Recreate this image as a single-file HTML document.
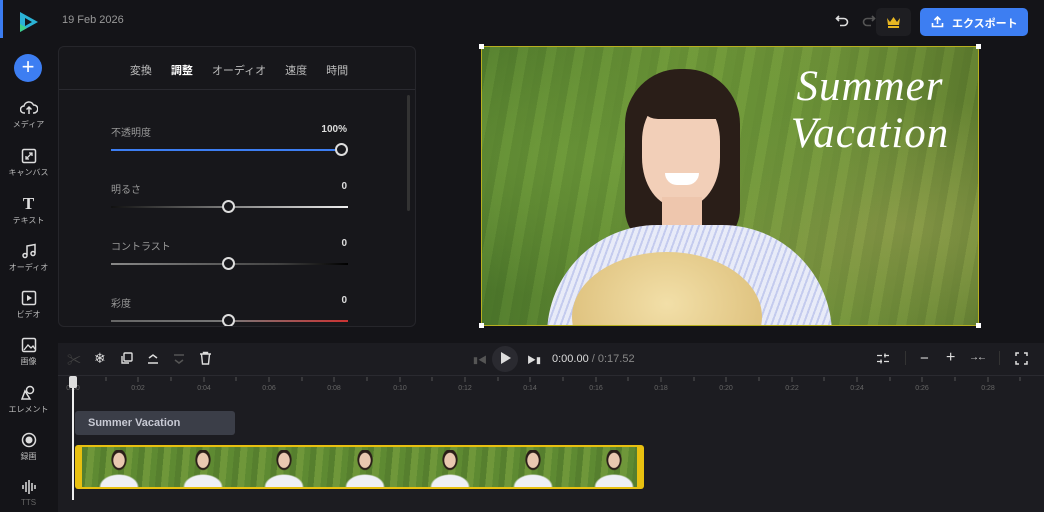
<!DOCTYPE html>
<html><head><meta charset="utf-8"><style>
*{margin:0;padding:0;box-sizing:border-box}
body{width:1044px;height:512px;background:#141418;font-family:"Liberation Sans","Noto Sans CJK JP",sans-serif;color:#ccc;position:relative;overflow:hidden}
.a{position:absolute}
.si{position:absolute;left:0;width:57px;text-align:center;font-size:8px;color:#bbb}
.si svg{display:block;margin:0 auto 3px}
.panel{left:58px;top:46px;width:358px;height:281px;background:#17171b;border:1px solid #26262b;border-radius:6px;overflow:hidden}
.tabs{height:43px;border-bottom:1px solid #2a2a30;font-size:11px;color:#bbb;display:flex;justify-content:center;gap:19px;padding-top:15px;padding-left:4px}
.lbl{font-size:10px;color:#999}
.val{font-size:10px;color:#ddd;font-weight:bold}
.knob{width:13px;height:13px;border:2px solid #ddd;border-radius:50%;background:#18181c}
.tl{left:58px;top:343px;width:986px;height:169px;background:#1c1c21}
.th{position:absolute;top:450px;width:40px;height:37px;background:radial-gradient(ellipse 6px 8px at 50% 28%,#e9c8b0 90%,transparent),radial-gradient(ellipse 8px 11px at 50% 26%,#2a1e18 90%,transparent),radial-gradient(ellipse 20px 13px at 50% 100%,#eef0f6 90%,transparent)}
</style></head><body>
<div class="a" style="left:0;top:0;width:3px;height:38px;background:#3b7cf0"></div>
<svg class="a" style="left:17px;top:10px" width="24" height="24" viewBox="0 0 24 24"><path d="M3 2 L3 22 L21 12 Z" fill="#2bb3d6"/><path d="M8 8 L8 16 L15 12 Z" fill="#141418"/><path d="M3 14 L3 22 L10 18Z" fill="#3fd08a"/></svg>
<div class="a" style="left:62px;top:14px;font-size:11px;color:#999">19 Feb 2026</div>
<svg class="a" style="left:835px;top:13px" width="14" height="14" viewBox="0 0 14 14"><path d="M4 3 L1.5 5.5 L4 8 M2 5.5 H9 a3.5 3.5 0 0 1 0 7 H5" stroke="#ddd" stroke-width="1.6" fill="none"/></svg>
<svg class="a" style="left:862px;top:13px" width="14" height="14" viewBox="0 0 14 14"><path d="M10 3 L12.5 5.5 L10 8 M12 5.5 H5 a3.5 3.5 0 0 0 0 7 H9" stroke="#555" stroke-width="1.6" fill="none"/></svg>
<div class="a" style="left:876px;top:8px;width:35px;height:28px;background:#1e1e22;border-radius:5px"></div>
<svg class="a" style="left:886px;top:15px" width="15" height="13" viewBox="0 0 15 13"><path d="M1 3 L4 7 L7.5 2 L11 7 L14 3 L13 10 H2 Z" fill="#e7b622"/><rect x="2" y="11" width="11" height="2" fill="#e7b622"/></svg>
<div class="a" style="left:920px;top:8px;width:108px;height:28px;background:#3d7ef2;border-radius:5px;color:#fff;font-size:11px;font-weight:bold;padding:7px 0 0 32px">エクスポート</div>
<svg class="a" style="left:931px;top:15px" width="13" height="13" viewBox="0 0 13 13"><path d="M6.5 9 V2 M3.5 5 L6.5 2 L9.5 5 M1.5 8 V11.5 H11.5 V8" stroke="#fff" stroke-width="1.6" fill="none"/></svg>

<div class="a" style="left:14px;top:54px;width:28px;height:28px;border-radius:50%;background:#3d7ef2;color:#fff;font-size:22px;line-height:26px;text-align:center">+</div>
<div class="si" style="top:100px"><svg width="18" height="16" viewBox="0 0 18 16"><path d="M5 13 H4 a3.5 3.5 0 0 1 0-7 a5 5 0 0 1 9.5-1 a3.7 3.7 0 0 1 0.5 8 H13 M9 14 V7 M6.5 9.5 L9 7 L11.5 9.5" stroke="#ddd" stroke-width="1.5" fill="none"/></svg>メディア</div>
<div class="si" style="top:148px"><svg width="16" height="16" viewBox="0 0 16 16"><rect x="1.5" y="1.5" width="13" height="13" rx="1.5" stroke="#ddd" stroke-width="1.5" fill="none"/><path d="M5 11 L11 5 M8 5 H11 V8 M5 8 V11 H8" stroke="#ddd" stroke-width="1.3" fill="none"/></svg>キャンバス</div>
<div class="si" style="top:196px"><div style="font-family:'Liberation Serif',serif;font-size:17px;color:#ddd;font-weight:bold;line-height:16px;margin-bottom:3px">T</div>テキスト</div>
<div class="si" style="top:243px"><svg width="16" height="16" viewBox="0 0 16 16"><path d="M6 12 V3 L14 1.5 V10" stroke="#ddd" stroke-width="1.5" fill="none"/><circle cx="4" cy="12.5" r="2" stroke="#ddd" stroke-width="1.5" fill="none"/><circle cx="12" cy="10.5" r="2" stroke="#ddd" stroke-width="1.5" fill="none"/></svg>オーディオ</div>
<div class="si" style="top:290px"><svg width="16" height="16" viewBox="0 0 16 16"><rect x="1.5" y="1.5" width="13" height="13" rx="1.5" stroke="#ddd" stroke-width="1.5" fill="none"/><path d="M6 5 L11 8 L6 11Z" fill="#ddd"/></svg>ビデオ</div>
<div class="si" style="top:337px"><svg width="16" height="16" viewBox="0 0 16 16"><rect x="1.5" y="1.5" width="13" height="13" rx="1.5" stroke="#ddd" stroke-width="1.5" fill="none"/><path d="M3 13 L7 8 L10 11 L12 9 L14 12" stroke="#ddd" stroke-width="1.3" fill="none"/></svg>画像</div>
<div class="si" style="top:385px"><svg width="16" height="16" viewBox="0 0 16 16"><circle cx="9" cy="5" r="3.5" stroke="#ddd" stroke-width="1.5" fill="none"/><path d="M4 6 L1 14 H9 Z" stroke="#ddd" stroke-width="1.5" fill="none"/></svg>エレメント</div>
<div class="si" style="top:432px"><svg width="16" height="16" viewBox="0 0 16 16"><circle cx="8" cy="8" r="6.5" stroke="#ddd" stroke-width="1.5" fill="none"/><circle cx="8" cy="8" r="3.5" fill="#ddd"/></svg>録画</div>
<div class="si" style="top:479px;color:#666"><svg width="16" height="16" viewBox="0 0 16 16"><path d="M2 6v4M5 3v10M8 1v14M11 4v8M14 6v4" stroke="#ddd" stroke-width="1.5"/></svg>TTS</div>

<div class="a panel">
<div class="tabs"><span>変換</span><span style="color:#fff;font-weight:bold">調整</span><span>オーディオ</span><span>速度</span><span>時間</span></div>
<div class="a" style="left:348px;top:48px;width:3px;height:116px;background:#333;border-radius:2px"></div>
<div class="a lbl" style="left:52px;top:77px">不透明度</div><div class="a val" style="right:68px;top:77px">100%</div>
<div class="a" style="left:52px;top:102px;width:230px;height:2px;background:#3d7ef2"></div><div class="a knob" style="left:276px;top:96px"></div>
<div class="a lbl" style="left:52px;top:134px">明るさ</div><div class="a val" style="right:68px;top:134px">0</div>
<div class="a" style="left:52px;top:159px;width:237px;height:2px;background:linear-gradient(90deg,#111,#eee)"></div><div class="a knob" style="left:163px;top:153px"></div>
<div class="a lbl" style="left:52px;top:191px">コントラスト</div><div class="a val" style="right:68px;top:191px">0</div>
<div class="a" style="left:52px;top:216px;width:237px;height:2px;background:linear-gradient(90deg,#888,#444 70%,#000)"></div><div class="a knob" style="left:163px;top:210px"></div>
<div class="a lbl" style="left:52px;top:248px">彩度</div><div class="a val" style="right:68px;top:248px">0</div>
<div class="a" style="left:52px;top:273px;width:237px;height:2px;background:linear-gradient(90deg,#666,#777 50%,#c33)"></div><div class="a knob" style="left:163px;top:267px"></div>
</div>

<div class="a" style="left:481px;top:46px;width:498px;height:280px;overflow:hidden;border:1px solid #b8b020;background:radial-gradient(ellipse at 25% 40%,#6e9a3a,transparent 60%),radial-gradient(ellipse at 85% 65%,#8a9a48,transparent 50%),linear-gradient(90deg,#4f7a2c,#6f9838 40%,#72963a 70%,#627f30)">
 <div class="a" style="left:0;top:0;width:498px;height:280px;background:repeating-linear-gradient(100deg,rgba(30,60,20,.12) 0 8px,rgba(140,180,80,.08) 8px 18px,rgba(40,70,25,.1) 18px 28px)"></div>
 <div class="a" style="left:143px;top:22px;width:115px;height:180px;background:#2a1e18;border-radius:55px 55px 40px 40px"></div>
 <div class="a" style="left:160px;top:50px;width:78px;height:110px;background:#f2cfb8;border-radius:40% 40% 45% 45%"></div>
 <div class="a" style="left:156px;top:30px;width:88px;height:42px;background:#2a1e18;border-radius:44px 44px 10px 40px"></div>
 <div class="a" style="left:183px;top:126px;width:34px;height:12px;background:#fff;border-radius:0 0 17px 17px"></div>
 <div class="a" style="left:180px;top:150px;width:40px;height:40px;background:#eec6ad"></div>
 <div class="a" style="left:65px;top:178px;width:285px;height:140px;background:repeating-linear-gradient(110deg,#e8ebf8 0 4px,#c4cbee 4px 6px);border-radius:110px 110px 0 0"></div>
 <div class="a" style="left:90px;top:205px;width:190px;height:130px;background:radial-gradient(ellipse at 50% 40%,#f2dfa8,#d8b870);border-radius:50%"></div>
 <div class="a" style="left:298px;top:16px;width:180px;font-family:'Liberation Serif',serif;font-style:italic;color:#fff;font-size:43px;line-height:47px;text-align:center;letter-spacing:1px">Summer<br>Vacation</div>
</div>
<div class="a" style="left:479px;top:44px;width:5px;height:5px;background:#fff"></div>
<div class="a" style="left:976px;top:44px;width:5px;height:5px;background:#fff"></div>
<div class="a" style="left:976px;top:323px;width:5px;height:5px;background:#fff"></div>
<div class="a" style="left:479px;top:323px;width:5px;height:5px;background:#fff"></div>

<div class="a tl"></div>
<div class="a" style="left:58px;top:375px;width:986px;height:1px;background:#2a2a30"></div>
<div class="a" style="left:67px;top:350px;font-size:14px;color:#444">✂</div>
<div class="a" style="left:94px;top:350px;font-size:14px;color:#ddd">❄</div>
<svg class="a" style="left:120px;top:352px" width="13" height="13" viewBox="0 0 13 13"><rect x="4" y="1" width="8" height="8" rx="1" stroke="#ddd" stroke-width="1.4" fill="none"/><path d="M2 4 V11 H9" stroke="#ddd" stroke-width="1.4" fill="none"/></svg>
<svg class="a" style="left:146px;top:352px" width="14" height="14" viewBox="0 0 14 14"><path d="M3 6 L7 3 L11 6 M2 11 H12" stroke="#ddd" stroke-width="1.5" fill="none"/></svg>
<svg class="a" style="left:172px;top:352px" width="14" height="14" viewBox="0 0 14 14"><path d="M3 8 L7 11 L11 8 M2 3 H12" stroke="#555" stroke-width="1.5" fill="none"/></svg>
<svg class="a" style="left:199px;top:351px" width="13" height="14" viewBox="0 0 13 14"><path d="M1 3 H12 M4.5 3 V1.5 H8.5 V3 M2.5 3 L3.5 13 H9.5 L10.5 3" stroke="#ddd" stroke-width="1.4" fill="none"/></svg>
<div class="a" style="left:473px;top:353px;font-size:9px;color:#555">▮◀</div>
<div class="a" style="left:492px;top:346px;width:26px;height:26px;border-radius:50%;background:#2a2a30"></div>
<div class="a" style="left:501px;top:352px;width:0;height:0;border-left:10px solid #ddd;border-top:6px solid transparent;border-bottom:6px solid transparent"></div>
<div class="a" style="left:527px;top:353px;font-size:9px;color:#ddd">▶▮</div>
<div class="a" style="left:552px;top:353px;font-size:11px;color:#ddd">0:00.00 <span style="color:#888">/ 0:17.52</span></div>
<svg class="a" style="left:876px;top:352px" width="14" height="13" viewBox="0 0 14 13"><path d="M1 3.5H6M8 3.5H13M9 1.5V5.5M1 9.5H6M8 9.5H13M5 7.5V11.5" stroke="#ddd" stroke-width="1.3"/></svg>
<div class="a" style="left:905px;top:351px;width:1px;height:14px;background:#333"></div>
<div class="a" style="left:920px;top:350px;font-size:15px;color:#ddd">−</div>
<div class="a" style="left:946px;top:349px;font-size:16px;color:#ddd">+</div>
<div class="a" style="left:969px;top:352px;font-size:10px;color:#ddd;letter-spacing:-2px">→←</div>
<div class="a" style="left:999px;top:351px;width:1px;height:14px;background:#333"></div>
<svg class="a" style="left:1015px;top:352px" width="13" height="13" viewBox="0 0 13 13"><path d="M1 4V1H4M9 1H12V4M12 9V12H9M4 12H1V9" stroke="#ddd" stroke-width="1.5" fill="none"/></svg>
<svg class="a" style="left:58px;top:376px" width="986" height="20">
<g stroke="#555" stroke-width="1">
<path d="M15 1v5M48 1v4M80 1v5M113 1v4M146 1v5M178 1v4M211 1v5M244 1v4M276 1v5M309 1v4M342 1v5M374 1v4M407 1v5M440 1v4M472 1v5M505 1v4M538 1v5M570 1v4M603 1v5M636 1v4M668 1v5M701 1v4M734 1v5M766 1v4M799 1v5M832 1v4M864 1v5M897 1v4M930 1v5M962 1v4"/></g>
<g fill="#666" font-size="7" font-family="Liberation Sans" text-anchor="middle">
<text x="15" y="14">0:00</text><text x="80" y="14">0:02</text><text x="146" y="14">0:04</text><text x="211" y="14">0:06</text><text x="276" y="14">0:08</text><text x="342" y="14">0:10</text><text x="407" y="14">0:12</text><text x="472" y="14">0:14</text><text x="538" y="14">0:16</text><text x="603" y="14">0:18</text><text x="668" y="14">0:20</text><text x="734" y="14">0:22</text><text x="799" y="14">0:24</text><text x="864" y="14">0:26</text><text x="930" y="14">0:28</text></g></svg>
<div class="a" style="left:75px;top:411px;width:160px;height:24px;background:#3b3e48;border-radius:3px;color:#c8cad4;font-size:11px;font-weight:bold;padding:6px 0 0 13px">Summer Vacation</div>
<div class="a" style="left:75px;top:445px;width:569px;height:44px;background:#e8c010;border-radius:3px"></div>
<div class="a" style="left:82px;top:447px;width:555px;height:40px;overflow:hidden;background:repeating-linear-gradient(95deg,#567f2e 0 6px,#6f973a 6px 13px,#5e8a32 13px 19px)"></div>
<div class="th" style="left:99px"></div>
<div class="th" style="left:183px"></div>
<div class="th" style="left:264px"></div>
<div class="th" style="left:345px"></div>
<div class="th" style="left:430px"></div>
<div class="th" style="left:513px"></div>
<div class="th" style="left:594px"></div>
<div class="a" style="left:72px;top:378px;width:2px;height:122px;background:#eee"></div>
<div class="a" style="left:69px;top:376px;width:8px;height:12px;background:#ddd;border-radius:2px"></div>
</body></html>
